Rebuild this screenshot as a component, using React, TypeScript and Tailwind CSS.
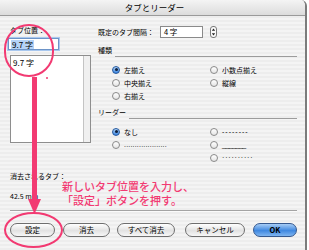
import type { ReactNode } from "react";

function Radio({ on, children }: { on?: boolean; children?: ReactNode }) {
  return (
    <div className="flex h-[13px] items-center">
      {on ? (
        <span className="flex h-[8px] w-[8px] items-center justify-center rounded-full border border-[#24589e] bg-[linear-gradient(#b3d6fa,#3a84e0)]">
          <span className="h-[3px] w-[3px] rounded-full bg-[#0d1f3c]" />
        </span>
      ) : (
        <span className="h-[8px] w-[8px] rounded-full border border-[#8a8a8a] bg-[linear-gradient(#ffffff,#e4e4e4)]" />
      )}
      <span className="ml-[4px] text-[7px] leading-[10px] text-black">{children}</span>
    </div>
  );
}

function Btn({ className, primary, children }: { className: string; primary?: boolean; children: ReactNode }) {
  return (
    <div
      className={
        "flex h-[14px] items-center justify-center rounded-full text-[7.5px] leading-none " +
        (primary
          ? "border border-[#34588f] bg-[linear-gradient(#a7cdf6,#3f88e0_55%,#7fb5f0)] font-bold text-black "
          : "border border-[#6e6e6e] bg-[linear-gradient(#ffffff,#e2e2e2_55%,#f7f7f7)] text-black ") +
        className
      }
    >
      {children}
    </div>
  );
}

function GroupTitle({ label }: { label: string }) {
  return (
    <div className="flex h-[11px] items-start">
      <span className="text-[7px] leading-[9px]">{label}</span>
      <span className="ml-[3px] flex-1 self-end border-b border-[#9c9c9c]" />
    </div>
  );
}

export default function App() {
  return (
    <div className="relative h-[250px] w-[309px] overflow-hidden bg-white font-['Noto_Sans_CJK_JP',sans-serif] text-black">
      <div className="flex h-[250px] w-[307px] flex-col overflow-hidden rounded-tr-[6px] border-r-2 border-[#7c7c7c]">
        {/* title bar */}
        <div className="flex h-[16px] shrink-0 items-center justify-center border-b border-[#9a9a9a] bg-[linear-gradient(#f4f4f4,#dcdcdc)]">
          <span className="pl-[4px] text-[8.5px] leading-none">タブとリーダー</span>
        </div>

        {/* body */}
        <div className="flex-1 bg-[repeating-linear-gradient(0deg,#ededed_0px,#ededed_2px,#f4f4f4_2px,#f4f4f4_4px)]">
          <div className="flex h-[194px]">
            {/* left column */}
            <div className="ml-[8px] flex w-[83px] flex-col">
              <div className="ml-[2px] mt-[9px] h-[10px] text-[7px] leading-[10px]">タブ位置：</div>
              <div className="mt-[3px] flex h-[12px] w-[51px] items-center border border-[#6d94c8] bg-white pl-[2px] shadow-[0_0_0_1px_#a9c8ef]">
                <span className="bg-[#b5d3f7] px-[1px] text-[8px] leading-[9px]">9.7 字</span>
              </div>
              <div className="ml-[2px] mt-[5px] flex h-[88px] w-[81px] border border-[#8e8e8e] bg-white">
                <div className="flex-1 pl-[2px] pt-[2px] text-[8px] leading-[10px]">9.7 字</div>
                <div className="w-[7px] border-l border-[#c4c4c4] bg-[#f0f0f0]" />
              </div>
              <div className="ml-[2px] mt-[28px] h-[10px] text-[7px] leading-[10px]">消去されるタブ：</div>
              <div className="ml-[2px] mt-[10px] h-[10px] text-[7px] leading-[10px]">42.5 mm</div>
            </div>

            {/* right column */}
            <div className="ml-[7px] flex w-[199px] flex-col">
              <div className="mt-[10px] flex h-[12px] items-center">
                <span className="w-[62px] text-[7px] leading-[10px]">既定のタブ間隔：</span>
                <div className="flex h-[12px] w-[43px] items-center border border-[#8a8a8a] bg-white pl-[3px] text-[7.5px] leading-none">
                  4 字
                </div>
                <svg className="ml-[7px]" width="7" height="12" viewBox="0 0 7 12">
                  <rect x="0.5" y="0.5" width="6" height="11" rx="2.5" fill="#fafafa" stroke="#7a7a7a" />
                  <path d="M3.5 2.5 L5.2 4.8 L1.8 4.8 Z" fill="#222" />
                  <path d="M3.5 9.5 L5.2 7.2 L1.8 7.2 Z" fill="#222" />
                </svg>
              </div>

              <div className="mt-[8px]">
                <GroupTitle label="種類" />
              </div>
              <div className="mt-[6px] grid grid-cols-[98px_1fr] pl-[14px]">
                <Radio on>左揃え</Radio>
                <Radio>小数点揃え</Radio>
                <Radio>中央揃え</Radio>
                <Radio>縦線</Radio>
                <Radio>右揃え</Radio>
                <div />
              </div>

              <div className="mt-[6px]">
                <GroupTitle label="リーダー" />
              </div>
              <div className="mt-[6px] grid grid-cols-[98px_1fr] pl-[14px]">
                <Radio on>なし</Radio>
                <Radio>
                  <span className="font-['Liberation_Sans',sans-serif] tracking-[1px]">--------</span>
                </Radio>
                <Radio>
                  <span className="font-['Liberation_Sans',sans-serif] tracking-[0.2px] text-black">....................</span>
                </Radio>
                <Radio>
                  <span className="font-['Liberation_Sans',sans-serif] tracking-[-0.5px]">_______</span>
                </Radio>
                <div />
                <Radio>
                  <span className="font-['Liberation_Sans',sans-serif] tracking-[0.8px]">··········</span>
                </Radio>
              </div>
            </div>
          </div>

          {/* separator */}
          <div className="ml-[10px] h-[2px] w-[287px] border-t border-b border-t-[#a4a4a4] border-b-[#fbfbfb]" />

          {/* buttons */}
          <div className="mt-[11px] flex">
            <Btn className="ml-[10px] w-[45px]">設定</Btn>
            <Btn className="ml-[8px] w-[47px]">消去</Btn>
            <Btn className="ml-[7px] w-[58px]">すべて消去</Btn>
            <Btn className="ml-[10px] w-[60px]">キャンセル</Btn>
            <Btn className="ml-[8px] w-[44px]" primary>
              OK
            </Btn>
          </div>
        </div>
      </div>

      {/* annotations */}
      <div className="absolute left-[4px] top-[24px] h-[53px] w-[50px] rounded-full border-2 border-[#f23a72]" />
      <div className="absolute left-[46px] top-[77px] h-[2px] w-[2px] rounded-full bg-[#f23a72]" />
      <div className="absolute left-[32px] top-[77px] h-[124px] w-[5px] bg-[#f23a72]" />
      <svg className="absolute left-[28px] top-[199px]" width="13" height="15" viewBox="0 0 13 15">
        <path d="M0 0 L13 0 L6.5 15 Z" fill="#f23a72" />
      </svg>
      <div className="absolute left-[4px] top-[212px] h-[36px] w-[59px] rounded-[50%] border-2 border-[#f23a72]" />
      <div className="absolute left-[62px] top-[179px] text-[11px] font-medium leading-[14px] text-[#f23a72]">
        <div>新しいタブ位置を入力し、</div>
        <div>「設定」ボタンを押す。</div>
      </div>
    </div>
  );
}
